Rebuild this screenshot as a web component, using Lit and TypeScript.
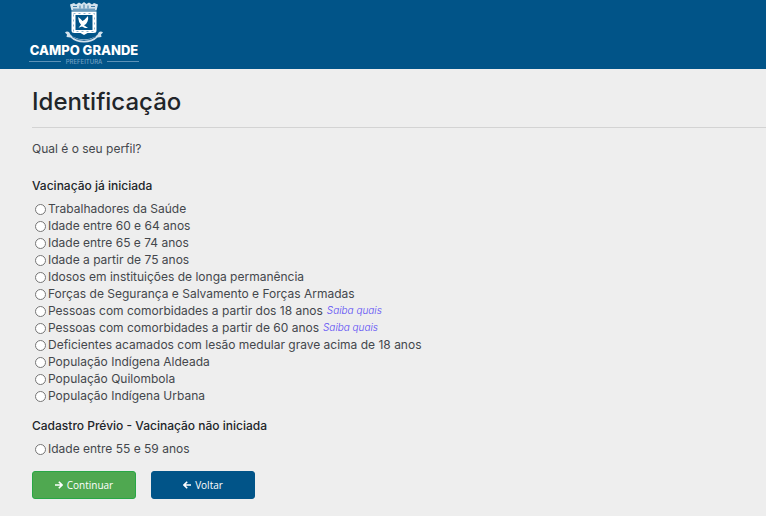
import { LitElement, html, css, svg } from "lit";
import { customElement, state } from "lit/decorators.js";

interface Profile {
  id: string;
  label: string;
  more?: boolean;
}

const STARTED: Profile[] = [
  { id: "saude", label: "Trabalhadores da Saúde" },
  { id: "i60", label: "Idade entre 60 e 64 anos" },
  { id: "i65", label: "Idade entre 65 e 74 anos" },
  { id: "i75", label: "Idade a partir de 75 anos" },
  { id: "idosos", label: "Idosos em instituições de longa permanência" },
  { id: "forcas", label: "Forças de Segurança e Salvamento e Forças Armadas" },
  { id: "com18", label: "Pessoas com comorbidades a partir dos 18 anos", more: true },
  { id: "com60", label: "Pessoas com comorbidades a partir de 60 anos", more: true },
  { id: "acamados", label: "Deficientes acamados com lesão medular grave acima de 18 anos" },
  { id: "aldeada", label: "População Indígena Aldeada" },
  { id: "quilombola", label: "População Quilombola" },
  { id: "urbana", label: "População Indígena Urbana" },
];

const UPCOMING: Profile[] = [{ id: "i55", label: "Idade entre 55 e 59 anos" }];

@customElement("city-logo")
export class CityLogo extends LitElement {
  static styles = css`
    :host {
      display: block;
    }
    svg {
      display: block;
    }
    .name {
      font: 800 13px "Inter", sans-serif;
      fill: #fff;
    }
    .sub {
      font: 500 6px "Inter", sans-serif;
      fill: #6f9fc2;
    }
  `;

  render() {
    return html`<svg width="112" height="66" viewBox="0 0 112 66" role="img" aria-label="Campo Grande Prefeitura">
      ${svg`
        <path d="M42 4.500 46 3l2 1.500L51 2.500l2.500 1.500L56 2l2.500 2L61 2.500l3 2L66 3l4 1.500-1.500 6h-25z" fill="#d3e2ed" />
        <path d="M45 6.500h4M52 5.500v3M56 4.500v4M60 5.500v3M63 6.500h4M45 9.200h22" stroke="#3d7ca8" stroke-width="1" fill="none" />
        <path d="M43.500 11.500h25v19q0 2.500-3 2.500h-6l-3.500 2-3.500-2h-6q-3 0-3-2.500z" fill="#fff" />
        <rect x="47.500" y="15" width="17" height="15" fill="#015488" />
        <path d="M45.500 13.500h21v18h-21z" fill="none" stroke="#8db4ce" stroke-width="1" stroke-dasharray="2 3" />
        <path d="M50 17q2.500 1.500 4.500 4l2-1.300 3.500-3.700q.6 3-.5 5.500l-1.500 2.500-2 1.200 4 2.800h-3l-3-1.600-3.500 1.300 2.500-3q-2.500-2.500-3-7.700z" fill="#fff" />
        <path d="M37 32.500q1.500-1.500 4-.5 2 6.500 15 7.500 13-1 15-7.500 2.500-1 4 .5l-2 2 .5 2.500-4 .5q-5 5-13.500 5t-13.500-5l-4-.5.500-2.500z" fill="#d3e2ed" />
        <path d="M44 36.500q5 4 12 4t12-4" fill="none" stroke="#2d719f" stroke-width="1" />
        <path d="M1 61.500h32M79 61.500h32" stroke="#5d92b8" stroke-width="1" />
      `}
      <text class="name" x="56" y="55" text-anchor="middle">CAMPO GRANDE</text>
      <text class="sub" x="56" y="64" text-anchor="middle">PREFEITURA</text>
    </svg>`;
  }
}

@customElement("app-root")
export class AppRoot extends LitElement {
  @state() private selected = "";

  static styles = css`
    :host {
      display: block;
      min-height: 100vh;
      background: #eee;
      color: #44474c;
      font: 400 12px/17px "Inter", sans-serif;
    }
    header {
      background: #015488;
      height: 69px;
      padding-left: 28px;
      box-sizing: border-box;
    }
    main {
      padding: 16px 0 16px 32px;
    }
    h1 {
      margin: 0;
      padding: 4px 0 12px;
      border-bottom: 1px solid #d3d3d3;
      color: #212529;
      font-size: 24px;
      line-height: 26px;
      font-weight: 500;
    }
    .question {
      margin: 12px 0 0;
    }
    fieldset {
      border: 0;
      margin: 0;
      padding: 0;
      min-width: 0;
    }
    legend {
      padding: 0;
      margin: 0 0 6px;
      color: #212529;
      font-weight: 500;
    }
    .started {
      margin-top: 20px;
    }
    .upcoming {
      margin-top: 13px;
    }
    .row {
      display: flex;
      align-items: center;
      height: 17px;
    }
    .row label {
      display: flex;
      align-items: center;
      white-space: nowrap;
    }
    input {
      appearance: none;
      box-sizing: border-box;
      width: 11px;
      height: 11px;
      margin: 2px 2px 0 3px;
      border: 1px solid #767676;
      border-radius: 50%;
      background: #fff;
    }
    input:checked {
      border: 3px solid #015488;
    }
    a {
      margin-left: 4px;
      color: #5a4cf5;
      font-size: 10px;
      font-style: italic;
      font-weight: 300;
      text-decoration: none;
    }
    .actions {
      display: flex;
      gap: 15px;
      margin-top: 14px;
    }
    button {
      display: flex;
      align-items: center;
      justify-content: center;
      gap: 4px;
      width: 104px;
      height: 28px;
      padding: 0;
      border: 1px solid #015488;
      border-radius: 3px;
      background: #015488;
      color: #fff;
      font: 400 10px/14px "Open Sans", sans-serif;
    }
    .go {
      border-color: #28a745;
      background: #4fa850;
    }
  `;

  private renderRow(p: Profile) {
    return html`<div class="row">
      <label
        ><input
          type="radio"
          name="perfil"
          .checked=${this.selected === p.id}
          @change=${() => (this.selected = p.id)}
        />${p.label}</label
      >${p.more ? html`<a href="#saiba-quais">Saiba quais</a>` : ""}
    </div>`;
  }

  render() {
    return html`
      <header><city-logo></city-logo></header>
      <main>
        <h1>Identificação</h1>
        <p class="question">Qual é o seu perfil?</p>
        <fieldset class="started">
          <legend>Vacinação já iniciada</legend>
          ${STARTED.map((p) => this.renderRow(p))}
        </fieldset>
        <fieldset class="upcoming">
          <legend>Cadastro Prévio - Vacinação não iniciada</legend>
          ${UPCOMING.map((p) => this.renderRow(p))}
        </fieldset>
        <div class="actions">
          <button class="go" type="button">
            <svg width="8" height="8" viewBox="0 0 8 8" fill="none" stroke="#fff" stroke-width="1.600" aria-hidden="true">
              <path d="M0 4h7M3.800.800 7 4 3.800 7.200" />
            </svg>
            Continuar
          </button>
          <button type="button">
            <svg width="8" height="8" viewBox="0 0 8 8" fill="none" stroke="#fff" stroke-width="1.600" aria-hidden="true">
              <path d="M8 4H1M4.200.800 1 4l3.200 3.200" />
            </svg>
            Voltar
          </button>
        </div>
      </main>
    `;
  }
}
